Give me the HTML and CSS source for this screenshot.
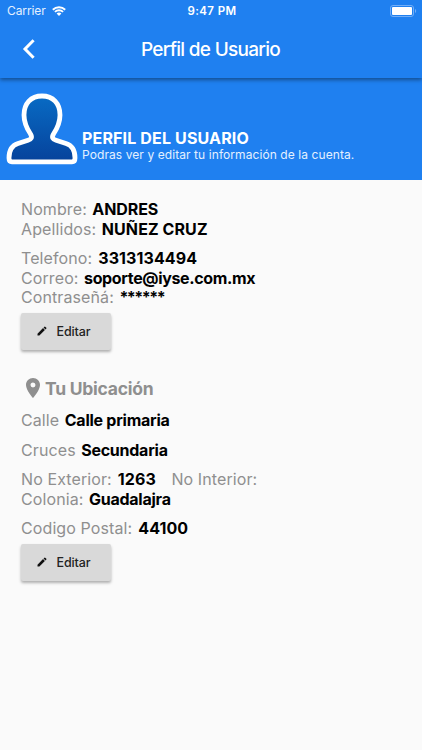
FILE: index.html
```html
<!DOCTYPE html>
<html lang="es">
<head>
    <meta charset="UTF-8">
    <meta name="viewport" content="width=device-width, initial-scale=1.0">
    <title>Perfil de Usuario</title>
    <link rel="stylesheet" href="styles.css">
</head>
<body>
    <header class="topbar">
        <div class="status">
            <div class="carrier">
                <span>Carrier</span>
                <svg class="wifi" viewBox="0 0 14 10">
                    <path d="M.8 3.7a9 9 0 0 1 12.4 0M2.9 5.9a6 6 0 0 1 8.2 0" fill="none" stroke="#fff" stroke-width="1.9"/>
                    <path d="M7 10 4.6 7.6a3.4 3.4 0 0 1 4.8 0z" fill="#fff"/>
                </svg>
            </div>
            <span class="time">9:47 PM</span>
            <svg class="battery" viewBox="0 0 27 12">
                <rect x=".5" y=".5" width="23" height="11" rx="2.5" fill="none" stroke="#72aef7"/>
                <rect x="2" y="2" width="20" height="8" rx="1" fill="#fff"/>
                <path d="M25 4v4c1.6-.6 1.6-3.4 0-4z" fill="#72aef7"/>
            </svg>
        </div>
        <div class="navbar">
            <svg class="back" viewBox="0 0 14 20">
                <path d="M11.6 1.2 3 10l8.6 8.8" fill="none" stroke="#fff" stroke-width="3"/>
            </svg>
            <h1>Perfil de Usuario</h1>
        </div>
    </header>
    <section class="banner">
        <svg class="avatar" viewBox="0 0 72 72">
            <defs>
                <linearGradient id="skin" x1="0" y1="0" x2="0" y2="1">
                    <stop offset="0" stop-color="#086bc4"/>
                    <stop offset="1" stop-color="#06429b"/>
                </linearGradient>
            </defs>
            <path d="M36 3C25 3 18 10.500 18 22C18 30 20.500 35 24.500 41C26.500 44.500 25.500 46 22 47.200L12 50.500C5.500 52.500 3 57 3 65Q3 68.800 6 68.800H66Q69 68.800 69 65C69 57 66.500 52.500 60 50.500L50 47.200C46.500 46 45.500 44.500 47.500 41C51.500 35 54 30 54 22C54 10.500 47 3 36 3Z" fill="url(#skin)" stroke="#fff" stroke-width="4.8"/>
        </svg>
        <div class="banner-text">
            <h2>PERFIL DEL USUARIO</h2>
            <p>Podras ver y editar tu información de la cuenta.</p>
        </div>
    </section>
    <main class="content">
        <div class="group">
            <p class="row"><span>Nombre:</span><b class="name">ANDRES</b></p>
            <p class="row"><span>Apellidos:</span><b class="surname">NUÑEZ CRUZ</b></p>
        </div>
        <div class="group">
            <p class="row"><span>Telefono:</span><b class="digits">3313134494</b></p>
            <p class="row"><span>Correo:</span><b class="mail">soporte@iyse.com.mx</b></p>
            <p class="row"><span>Contraseñá:</span><b class="password">******</b></p>
        </div>
        <button class="edit">
            <svg viewBox="0 0 24 24"><path d="M3 17.25V21h3.75L17.81 9.94l-3.75-3.75L3 17.25zM20.71 7.04a1 1 0 0 0 0-1.41l-2.34-2.34a1 1 0 0 0-1.41 0l-1.83 1.83 3.75 3.75 1.83-1.83z"/></svg>
            Editar
        </button>
        <h3 class="location">
            <svg viewBox="0 0 24 24"><path d="M12 2C8.13 2 5 5.13 5 9c0 5.25 7 13 7 13s7-7.75 7-13c0-3.87-3.13-7-7-7zm0 9.5a2.5 2.5 0 0 1 0-5 2.5 2.5 0 0 1 0 5z"/></svg>
            <span>Tu Ubicación</span>
        </h3>
        <div class="group">
            <p class="row"><span>Calle</span><b>Calle primaria</b></p>
        </div>
        <div class="group">
            <p class="row"><span>Cruces</span><b>Secundaria</b></p>
        </div>
        <div class="group">
            <p class="row"><span>No Exterior:</span><b class="digits">1263</b><span class="interior">No Interior:</span></p>
            <p class="row"><span>Colonia:</span><b>Guadalajra</b></p>
        </div>
        <div class="group">
            <p class="row"><span>Codigo Postal:</span><b class="digits">44100</b></p>
        </div>
        <button class="edit">
            <svg viewBox="0 0 24 24"><path d="M3 17.25V21h3.75L17.81 9.94l-3.75-3.75L3 17.25zM20.71 7.04a1 1 0 0 0 0-1.41l-2.34-2.34a1 1 0 0 0-1.41 0l-1.83 1.83 3.75 3.75 1.83-1.83z"/></svg>
            Editar
        </button>
    </main>
</body>
</html>
```

FILE: styles.css
```css
* {
    box-sizing: border-box;
}
body {
    margin: 0;
    height: 750px;
    overflow: hidden;
    background-color: #fafafa;
    font-family: Inter, "Liberation Sans", sans-serif;
}
h1, h2, h3, p {
    margin: 0;
}
svg {
    display: block;
    flex: none;
}
.topbar {
    position: relative;
    height: 78px;
    background-color: #1f80f0;
    color: #fff;
    box-shadow: 0 2px 4px rgba(0, 0, 0, 0.4);
}
.status {
    display: grid;
    grid-template-columns: 1fr auto 1fr;
    align-items: center;
    height: 21px;
    padding: 0 5px 0 7px;
    font-size: 12px;
}
.carrier {
    display: flex;
    align-items: center;
    gap: 6px;
    letter-spacing: -0.1px;
    color: #e4f0ff;
}
.wifi {
    width: 14px;
    height: 10px;
}
.time {
    font-weight: 600;
    font-size: 11.5px;
    letter-spacing: 0.4px;
}
.battery {
    justify-self: end;
    width: 27px;
    height: 12px;
}
.navbar {
    display: grid;
    grid-template-columns: 60px 1fr 61px;
    align-items: center;
    height: 56px;
}
.back {
    width: 14px;
    height: 20px;
    margin-left: 22px;
}
h1 {
    text-align: center;
    font-size: 19px;
    font-weight: 500;
    letter-spacing: -0.7px;
}
.banner {
    display: flex;
    height: 101.5px;
    padding: 15px 6px 0;
    gap: 4px;
    background-color: #1f80f0;
    color: #fff;
}
.avatar {
    width: 72px;
    height: 72px;
}
.banner-text {
    padding-top: 35px;
}
h2 {
    font-size: 16px;
    line-height: 20px;
    font-weight: 700;
    letter-spacing: 0.15px;
}
.banner-text p {
    font-size: 12px;
    line-height: 14px;
    letter-spacing: 0.08px;
    color: #e4f0ff;
}
.content {
    padding: 20.5px 21px 0;
}
.group + .group {
    margin-top: 10px;
}
.row {
    display: flex;
    height: 19.5px;
    font-size: 16px;
    line-height: 19.5px;
    letter-spacing: 0.1px;
    white-space: nowrap;
    color: #8f8f8f;
}
.row b {
    margin-left: 5.5px;
    color: #000;
    letter-spacing: -0.25px;
}
.row .name {
    letter-spacing: -0.1px;
}
.row .surname {
    letter-spacing: 0.1px;
}
.row .digits {
    margin-left: 6px;
    letter-spacing: 0.1px;
}
.row .mail {
    letter-spacing: -0.35px;
}
.row .password {
    letter-spacing: -1.5px;
}
.row .interior {
    margin-left: 15.5px;
}
.edit {
    display: flex;
    align-items: center;
    gap: 8.5px;
    width: 90px;
    height: 36.5px;
    margin-top: 5.5px;
    padding: 0 0 0 15px;
    border: 0;
    border-radius: 2px;
    background-color: #d9d9d9;
    box-shadow: 0 2px 3px rgba(0, 0, 0, 0.3);
    font-family: inherit;
    font-size: 12.5px;
    font-weight: 500;
    letter-spacing: -0.1px;
    color: #222;
}
.edit svg {
    width: 12px;
    height: 12px;
    fill: #111;
}
.location {
    display: flex;
    align-items: center;
    height: 24px;
    margin: 26.5px 0 11px;
    font-size: 17.5px;
    letter-spacing: -0.25px;
    color: #8f8f8f;
}
.location svg {
    width: 24px;
    height: 24px;
    fill: #8f8f8f;
}
```
